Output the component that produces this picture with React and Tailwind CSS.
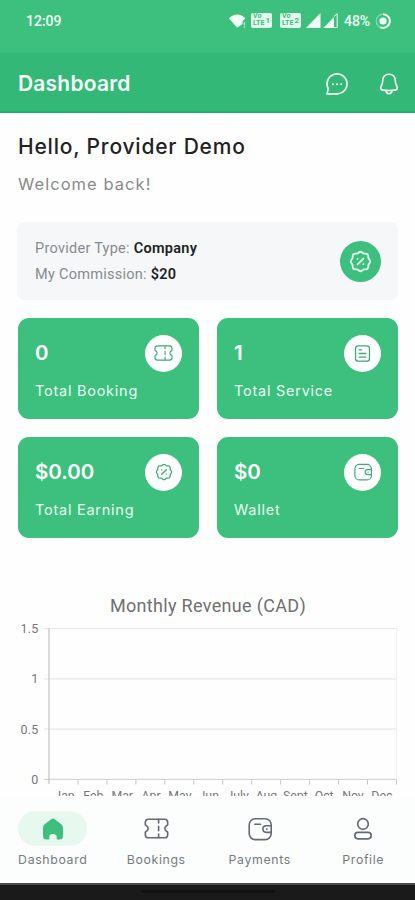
const TicketIcon = ({ className, strokeWidth = 1.6 }) => (
  <svg viewBox="0 0 26 22" className={className} fill="none" stroke="currentColor" strokeWidth={strokeWidth} strokeLinecap="round" strokeLinejoin="round">
    <path d="M4.500 1.300h17a3.200 3.200 0 0 1 3.200 3.200v2.700l-1.700 1.300a3.200 3.200 0 0 0 0 5l1.700 1.300v2.700a3.200 3.200 0 0 1-3.200 3.200h-17a3.200 3.200 0 0 1-3.200-3.200v-2.700l1.700-1.300a3.200 3.200 0 0 0 0-5L1.300 7.200V4.500a3.200 3.200 0 0 1 3.200-3.200z" />
    <path d="M15.200 1.500v3.800M15.200 8.700v4.600M15.200 16.700v3.800" />
  </svg>
);

const WalletIcon = ({ className, strokeWidth = 1.6 }) => (
  <svg viewBox="0 0 24 24" className={className} fill="none" stroke="currentColor" strokeWidth={strokeWidth} strokeLinecap="round" strokeLinejoin="round">
    <rect x="1.200" y="1.800" width="22" height="20.800" rx="6" />
    <path d="M23.200 8.800h-5a3.300 3.300 0 0 0 0 6.600h5M18.600 12.100h.4M6.800 7.300h5.700" />
  </svg>
);

const PercentIcon = ({ className, strokeWidth = 1.7 }) => (
  <svg viewBox="0 0 24 24" className={className} fill="none" stroke="currentColor" strokeWidth={strokeWidth} strokeLinecap="round" strokeLinejoin="round">
    <path d="M12 1.800c1.500 0 2.300 1.500 3.600 1.900 1.300.4 2.900-.2 3.900.8s.4 2.600.8 3.900c.4 1.300 1.900 2.100 1.900 3.600s-1.500 2.300-1.900 3.600c-.4 1.300.2 2.900-.8 3.900s-2.600.4-3.900.8c-1.300.4-2.100 1.900-3.600 1.900s-2.300-1.500-3.600-1.900c-1.300-.4-2.900.2-3.900-.8s-.4-2.600-.8-3.900c-.4-1.300-1.900-2.100-1.900-3.600s1.500-2.300 1.900-3.600c.4-1.300-.2-2.900.8-3.900s2.600-.4 3.900-.8c1.300-.4 2.100-1.900 3.600-1.900z" />
    <path d="M8.900 15.100l6.200-6.200M8.900 9.200h.2M14.900 14.800h.2" />
  </svg>
);

const DocumentIcon = ({ className }) => (
  <svg viewBox="0 0 20 20" className={className} fill="none" stroke="currentColor" strokeWidth="1.500" strokeLinecap="round" strokeLinejoin="round">
    <rect x="1.800" y="1" width="16.400" height="18" rx="3.200" />
    <path d="M6 5.800h3M6 10h8M6 14.200h8" />
  </svg>
);

const HomeIcon = ({ className }) => (
  <svg viewBox="0 0 22 22" className={className} fill="currentColor">
    <path d="M9.200 1.200a2.900 2.900 0 0 1 3.600 0l6.500 5.100a4.400 4.400 0 0 1 1.700 3.500v8.200a3.500 3.500 0 0 1-3.500 3.500h-2.800v-2.700a3.200 3.200 0 0 0-3.200-2.800h-1a3.200 3.200 0 0 0-3.200 2.800v2.700H4.500A3.500 3.500 0 0 1 1 18V9.800a4.400 4.400 0 0 1 1.700-3.500z" />
  </svg>
);

const ProfileIcon = ({ className }) => (
  <svg viewBox="0 0 20 24" className={className} fill="none" stroke="currentColor" strokeWidth="1.700">
    <circle cx="10" cy="7" r="5.300" />
    <rect x="1.800" y="15.300" width="16.400" height="6.500" rx="3.200" />
  </svg>
);

const ChatIcon = () => (
  <svg viewBox="0 0 24 24" className="h-6 w-6" fill="none" stroke="currentColor" strokeWidth="1.600" strokeLinecap="round" strokeLinejoin="round">
    <path d="M2 21.900h10A10 10 0 1 0 3.300 16.800L2 21.900" />
    <path d="M7.800 12.300h.1M12 12.300h.1M16.200 12.300h.1" strokeWidth="1.900" />
  </svg>
);

const BellIcon = () => (
  <svg viewBox="0 0 22 24" className="h-6 w-[22px]" fill="none" stroke="currentColor" strokeWidth="1.600" strokeLinecap="round" strokeLinejoin="round">
    <path d="M11 2.200c-4 0-6.300 3-6.300 6.500 0 3.800-2 5-2 7.200 0 1.400 1 2 2.600 2.200 3.800.5 7.600.5 11.400 0 1.600-.2 2.600-.8 2.600-2.200 0-2.200-2-3.400-2-7.200 0-3.500-2.300-6.500-6.300-6.500z" />
    <path d="M7.900 18.800c.5 2.100 1.700 2.900 3.100 2.900s2.600-.8 3.100-2.900" />
  </svg>
);

const SimBadge = ({ network, sim }) => (
  <div className="relative h-[15px] w-[21px] overflow-hidden rounded-[2px] bg-[#e2fbec] text-[#3dbf7c]">
    <div className="pl-[2px] text-[7px] font-bold leading-[7px]">{network}</div>
    <div className="pl-[2px] text-[7px] font-bold leading-[7px]">LTE</div>
    <span className="absolute right-[2px] top-[4px] text-[8px] font-bold leading-[8px]">{sim}</span>
  </div>
);

const StatusBar = () => (
  <div className="flex h-[53px] items-start justify-between bg-[#3dc07d] pl-[26px] pr-[24px] pt-[11px] font-[Roboto,sans-serif] text-[14px] font-medium leading-5 text-[#f0fff6]">
    <span>12:09</span>
    <div className="flex h-[19px] items-center">
      <svg viewBox="0 0 17 14" className="h-[14px] w-[17px]" fill="currentColor">
        <path d="M0 4.200C4.600-.9 12-.9 16.300 4.200L13.500 7.500V10L8.100 13.800z" />
        <path d="M14.700 8.300h1.400v3h-1.400zM14.700 12.200h1.400v1.500h-1.400z" opacity="0.7" />
      </svg>
      <div className="ml-[5px]"><SimBadge network="Vo" sim="1" /></div>
      <div className="ml-[8px]"><SimBadge network="Vo" sim="2" /></div>
      <svg viewBox="0 0 33 15" className="ml-[5px] h-[15px] w-[33px]" fill="currentColor">
        <path d="M0 15L14.500 0v15zM17.500 15L28 4v11z" />
        <path d="M28 3.500L31.200.7v13.800H17.700" fill="none" stroke="currentColor" strokeWidth="1" />
      </svg>
      <span className="ml-[5px] text-[14px] tracking-[-0.1px]">48%</span>
      <svg viewBox="0 0 16 16" className="ml-[5px] h-4 w-4" fill="none" stroke="currentColor">
        <circle cx="8" cy="8" r="6.800" strokeWidth="1.200" opacity="0.45" />
        <path d="M8 1.200a6.800 6.800 0 1 1-2.500 13.100" strokeWidth="1.900" />
        <circle cx="8" cy="8" r="3.600" fill="currentColor" stroke="none" />
      </svg>
    </div>
  </div>
);

const stats = [
  { value: "0", label: "Total Booking", icon: <TicketIcon className="h-4 w-[19px]" /> },
  { value: "1", label: "Total Service", icon: <DocumentIcon className="h-[17px] w-[17px]" /> },
  { value: "$0.00", label: "Total Earning", icon: <PercentIcon className="h-[18px] w-[18px]" /> },
  { value: "$0", label: "Wallet", icon: <WalletIcon className="h-[18px] w-[18px]" /> },
];

const StatCard = ({ value, label, icon }) => (
  <div className="h-[101px] rounded-[11px] bg-[#3dc07d] pl-[17px] pr-[17px] pt-[17px] text-white">
    <div className="flex h-[37px] items-center justify-between">
      <span className="text-[20.500px] font-semibold">{value}</span>
      <div className="flex h-[37px] w-[37px] items-center justify-center rounded-full bg-white text-[#3dab78]">{icon}</div>
    </div>
    <div className="mt-[9px] text-[14.500px] leading-5 tracking-[0.75px] text-[#e8fff2]">{label}</div>
  </div>
);

const months = ["Jan", "Feb", "Mar", "Apr", "May", "Jun", "July", "Aug", "Sept", "Oct", "Nov", "Dec"];
const ticks = ["1.5", "1", "0.5", "0"];

const RevenueChart = () => (
  <svg width="415" height="203" viewBox="0 0 415 203" className="block font-[Roboto,sans-serif]">
    <text x="208" y="18.500" textAnchor="middle" fontSize="18" letterSpacing="0.32" fill="#707070">Monthly Revenue (CAD)</text>
    {ticks.map((tick, i) => (
      <g key={tick}>
        <line x1="44" x2="397" y1={35.5 + i * 50.3} y2={35.5 + i * 50.3} stroke={i === 3 ? "#d5d5d5" : "#e7e7e7"} strokeWidth="1.200" />
        <text x="38.500" y={40 + i * 50.3} textAnchor="end" fontSize="12.500" letterSpacing="0.2" fill="#777">{tick}</text>
      </g>
    ))}
    <line x1="49" x2="49" y1="35" y2="191" stroke="#c6c6c6" strokeWidth="1.300" />
    <line x1="396.500" x2="396.500" y1="35" y2="191" stroke="#ededed" />
    {months.map((month, i) => (
      <g key={month}>
        <line x1={78 + i * 28.95} x2={78 + i * 28.95} y1="186.500" y2="191.500" stroke="#c4c4c4" />
        <text x={64.5 + i * 28.85} y="207.300" textAnchor="middle" fontSize="12.300" fill="#777">{month}</text>
      </g>
    ))}
  </svg>
);

const navItems = [
  { label: "Dashboard", active: true, icon: <HomeIcon className="h-[22px] w-[22px]" /> },
  { label: "Bookings", icon: <TicketIcon className="h-[21px] w-[25px]" strokeWidth={1.7} /> },
  { label: "Payments", icon: <WalletIcon className="h-6 w-6" /> },
  { label: "Profile", icon: <ProfileIcon className="h-6 w-5" /> },
];

const BottomNav = () => (
  <div className="flex h-[86px] bg-[#fbfefc] pl-px pt-[14px]">
    {navItems.map((item) => (
      <div key={item.label} className="flex flex-1 flex-col items-center">
        <div className={`flex h-[35px] w-[69px] items-center justify-center rounded-full ${item.active ? "bg-[#e7f8ee] text-[#3dc07d]" : "text-[#646b74]"}`}>
          {item.icon}
        </div>
        <span className="mt-[6px] text-[12.300px] leading-[16px] tracking-[0.65px] text-[#777b7e]">{item.label}</span>
      </div>
    ))}
  </div>
);

const App = () => {
  return (
    <div className="flex h-[900px] w-[415px] flex-col overflow-hidden bg-[#fefefe] font-[Inter,sans-serif]">
      <StatusBar />

      <div className="flex h-[60px] items-center justify-between border-b-2 border-[#1fae6b] bg-[#34b877] pl-[18px] pr-[15px] text-[#f3fff8]">
        <h1 className="pt-[3px] text-[21px] font-semibold tracking-[0.200px]">Dashboard</h1>
        <div className="flex items-center gap-[29px] pt-[3px]">
          <ChatIcon />
          <BellIcon />
        </div>
      </div>

      <div className="flex flex-1 flex-col overflow-hidden">
        <div className="px-[18px] pt-[20px]">
          <h2 className="text-[21px] font-medium leading-7 tracking-[0.8px] text-[#222]">Hello, Provider Demo</h2>
          <p className="mt-[11px] text-[16.500px] leading-6 tracking-[1.05px] text-[#8a8a8a]">Welcome back!</p>
        </div>

        <div className="mx-[17px] mt-[26px] flex h-[78px] shrink-0 items-center justify-between rounded-[7px] bg-[#f5f7f9] pl-[18px] pr-[17px]">
          <div className="pt-[2px] font-[Roboto,sans-serif] text-[14.500px] leading-[26px] tracking-[0.27px] text-[#888b8e]">
            <div>Provider Type: <span className="font-semibold text-[#222]">Company</span></div>
            <div>My Commission: <span className="font-semibold text-[#222]">$20</span></div>
          </div>
          <div className="flex h-[41px] w-[41px] items-center justify-center rounded-full bg-[#3dc07d] text-[#e8fff2]">
            <PercentIcon className="h-[23px] w-[23px]" strokeWidth={1.9} />
          </div>
        </div>

        <div className="mt-[17.500px] grid shrink-0 grid-cols-2 gap-[18px] pl-[18px] pr-[17px]">
          {stats.map((stat) => (
            <StatCard key={stat.label} {...stat} />
          ))}
        </div>

        <div className="mt-[55px] shrink-0">
          <RevenueChart />
        </div>
      </div>

      <BottomNav />
      <div className="flex h-[17px] justify-center border-t-2 border-[#4b4b4b] bg-[#1a1a1a] pt-[5px]">
        <div className="h-[3px] w-[134px] rounded-full bg-[#111]" />
      </div>
    </div>
  );
};

export default App;
